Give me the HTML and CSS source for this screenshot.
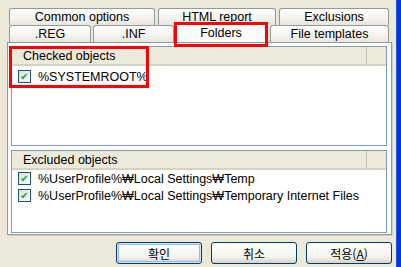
FILE: index.html
```html
<!DOCTYPE html>
<html lang="ko">
<head>
    <meta charset="UTF-8">
    <title>Folders</title>
    <link rel="stylesheet" href="styles.css">
</head>
<body>
    <div class="window">
        <div class="dialog">
            <div class="tabs">
                <div class="tab-row">
                    <div class="tab tab-common">Common options</div>
                    <div class="tab tab-html">HTML report</div>
                    <div class="tab tab-excl">Exclusions</div>
                </div>
                <div class="tab-row">
                    <div class="tab tab-reg">.REG</div>
                    <div class="tab tab-inf">.INF</div>
                    <div class="tab tab-folders active">Folders</div>
                    <div class="tab tab-templates">File templates</div>
                </div>
            </div>

            <div class="panel">
                <div class="list list-checked">
                    <div class="list-head">
                        <span class="col-name">Checked objects</span>
                        <span class="col-rest"></span>
                    </div>
                    <div class="item"><span class="check">✔</span>%SYSTEMROOT%</div>
                </div>

                <div class="list list-excluded">
                    <div class="list-head">
                        <span class="col-name">Excluded objects</span>
                        <span class="col-rest"></span>
                    </div>
                    <div class="item"><span class="check">✔</span>%UserProfile%₩Local Settings₩Temp</div>
                    <div class="item"><span class="check">✔</span>%UserProfile%₩Local Settings₩Temporary Internet Files</div>
                </div>
            </div>

            <div class="buttons">
                <button class="btn default">확인</button>
                <button class="btn">취소</button>
                <button class="btn">적용(<u>A</u>)</button>
            </div>

            <div class="mark mark-list"></div>
            <div class="mark mark-tab"></div>
        </div>
        <div class="frame"></div>
    </div>
</body>
</html>
```

FILE: styles.css
```css
body {
    margin: 0;
    padding: 0;
    background-color: #ece9d8;
    font-family: 'Liberation Sans', 'Noto Sans CJK KR', sans-serif;
    font-size: 12.5px;
    color: #000;
}
.window {
    display: flex;
    height: 267px;
}
.dialog {
    position: relative;
    width: 397px;
    padding-top: 8px;
    box-sizing: border-box;
}
.frame {
    width: 4px;
    background-color: #0831d9;
    border-left: 1px solid #1660e8;
}
.tabs {
    margin-left: 9px;
    width: 381px;
}
.tab-row {
    display: flex;
    height: 17px;
}
.tab-row + .tab-row {
    gap: 0;
}
.tab {
    box-sizing: border-box;
    height: 17px;
    line-height: 16px;
    text-align: center;
    border: 1px solid #919b9c;
    border-bottom: none;
    border-radius: 3px 3px 0 0;
    background: linear-gradient(#fefefe, #f4f3ee 60%, #e8e6dc);
}
.tab-common { width: 146px; margin-right: 3px; }
.tab-html { width: 118px; margin-right: 3px; }
.tab-excl { width: 110px; }
.tab-reg { width: 82px; margin-right: 2px; }
.tab-inf { width: 81px; }
.tab-folders { width: 94px; margin-right: 2px; }
.tab-templates { width: 119px; }
.tab.active {
    position: relative;
    z-index: 2;
    height: 19px;
    margin-top: -2px;
    line-height: 18px;
    background: #fcfcfe;
    border-top: 2px solid #ffc83c;
    line-height: 16px;
}
.panel {
    margin-left: 7px;
    width: 385px;
    height: 193px;
    box-sizing: border-box;
    border: 1px solid #919b9c;
    background-color: #fcfcfe;
    box-shadow: 1px 1px 0 #d2d0c6;
    padding: 3px 4px 0 3px;
}
.list {
    background-color: #fff;
    border: 1px solid #7f9db9;
    box-sizing: border-box;
}
.list-checked {
    height: 100px;
    margin-bottom: 4px;
}
.list-excluded {
    height: 83px;
}
.list-head {
    display: flex;
    height: 19px;
    line-height: 18px;
    background-color: #ebeadb;
    border-bottom: 2px solid #d6d2c2;
    box-sizing: border-box;
}
.col-name {
    width: 355px;
    padding-left: 11px;
    box-sizing: border-box;
    border-right: 1px solid #c7c5b2;
}
.col-rest {
    flex: 1;
}
.item {
    display: flex;
    align-items: center;
    height: 17px;
    padding-left: 6px;
    white-space: nowrap;
}
.list-checked .item { margin-top: 2px; }
.list-excluded .item:first-of-type { margin-top: 1px; }
.check {
    width: 13px;
    height: 13px;
    box-sizing: border-box;
    border: 1px solid #1c5180;
    background: linear-gradient(135deg, #dcdcd7, #fff);
    color: #21a121;
    font-family: 'DejaVu Sans', sans-serif;
    font-size: 10px;
    line-height: 11px;
    text-align: center;
    margin-right: 7px;
}
.buttons {
    display: flex;
    justify-content: flex-end;
    gap: 9px;
    margin-top: 7px;
    padding-right: 4px;
}
.btn {
    width: 86px;
    height: 22px;
    padding: 0;
    border: 1px solid #003c74;
    border-radius: 3px;
    background: linear-gradient(#fff, #f3f3ef 70%, #d6d0c5);
    font-family: 'Noto Sans CJK KR', 'Liberation Sans', sans-serif;
    font-size: 12px;
    color: #000;
}
.btn.default {
    box-shadow: inset 0 0 0 1px #cee7ff, inset 0 0 0 2px #98b8ea;
}
.mark {
    position: absolute;
    border: 3px solid #ff0000;
    box-sizing: border-box;
}
.mark-list {
    left: 9px;
    top: 46px;
    width: 140px;
    height: 42px;
}
.mark-tab {
    left: 174px;
    top: 22px;
    width: 94px;
    height: 25px;
    z-index: 3;
}
```
